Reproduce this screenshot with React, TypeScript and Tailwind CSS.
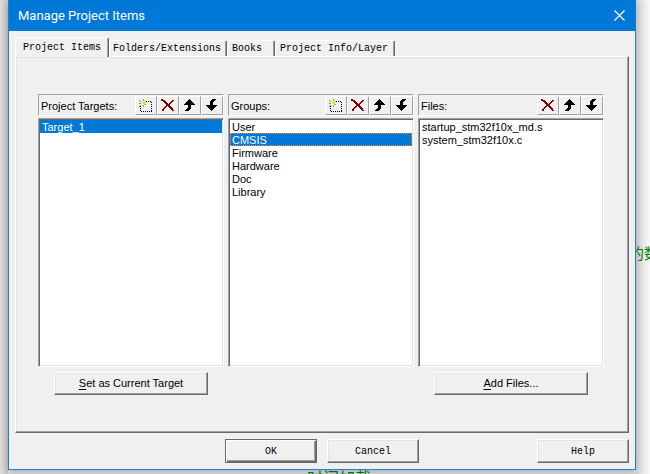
import { useState, type ReactNode } from "react";

type IconName = "new" | "delete" | "up" | "down";

const arrow = "M6 0h1v1h1v1h1v1h1v1h1v1h1v1H8v4H7v1H6v1H2v-1h1v-1h1V9h1V6H1V5h1V4h1V3h1V2h1V1h1z";

function ToolIcon({ name }: { name: IconName }) {
  return (
    <svg width="14" height="13" viewBox="0 0 14 13" shapeRendering="crispEdges" aria-hidden="true">
      {name === "new" && (
        <>
          <path d="M7 2.5h6M1.5 7v6M12.5 3v10M2 12.5h11" stroke="#000" strokeDasharray="1 1" fill="none" />
          <path
            d="M0 1h1v1H0zM1 2h1v1H1zM4 0h1v2H4zM0 4h2v1H0zM1 6h1v1H1zM0 7h1v1H0zM4 6h1v2H4zM6 5h1v1H6z"
            fill="#909090"
          />
          <path d="M6 1h1v1H6zM5 2h2v1H5zM3 3h3v2H3zM6 3h2v1H6zM5 5h1v1H5zM2 2h1v1H2z" fill="#e8e800" />
        </>
      )}
      {name === "delete" && (
        <path
          d="M0 0h2v1h2v1h1v1h1v1h1v1h1V4h1V3h1V2h1V1h2v1h-1v1h-1v1h-1v1H9v2h1v1h1v1h1v2h1v1h-2v-1h-1v-1H9V9H8V8H7V7H6v1H5v1H4v1H3v2H1v-2h1V9h1V8h1V7h1V5H4V4H3V3H2V2H0z"
          fill="#800000"
        />
      )}
      {name === "up" && <path d={arrow} fill="#000" />}
      {name === "down" && <path d={arrow} fill="#000" transform="rotate(180 6.5 6)" />}
    </svg>
  );
}

const iconLabels: Record<IconName, string> = {
  new: "New (Insert)",
  delete: "Delete",
  up: "Move Up",
  down: "Move Down",
};

function ListColumn({
  title,
  tools,
  items,
  initial,
  focused,
  children,
}: {
  title: string;
  tools: IconName[];
  items: string[];
  initial: number;
  focused?: boolean;
  children?: ReactNode;
}) {
  const [selected, setSelected] = useState(initial);
  return (
    <section className="flex min-w-0 flex-col" aria-label={title}>
      <div className="flex h-[22px] items-stretch border border-t-[#a0a0a0] border-l-[#a0a0a0] border-r-white border-b-white pt-px">
        <span className="flex-1 pl-0.5 leading-5">{title}:</span>
        {tools.map((t) => (
          <button
            key={t}
            type="button"
            aria-label={iconLabels[t]}
            className="flex w-[22px] items-center justify-center border border-t-white border-l-white border-r-[#a0a0a0] border-b-[#a0a0a0]"
          >
            <ToolIcon name={t} />
          </button>
        ))}
      </div>
      <ul
        role="listbox"
        aria-label={title}
        className="mt-0.5 flex-1 border border-t-[#a0a0a0] border-l-[#a0a0a0] border-r-white border-b-white bg-white p-px shadow-[inset_1px_1px_#696969,inset_-1px_-1px_#e3e3e3]"
      >
        {items.map((item, i) => (
          <li
            key={item}
            role="option"
            aria-selected={i === selected}
            onClick={() => setSelected(i)}
            className={
              "h-[13px] cursor-default pl-0.5 leading-[14px] " +
              (i === selected
                ? focused
                  ? "bg-[#0078d7] text-white outline-1 -outline-offset-1 outline-dotted outline-[#ff8728]"
                  : "bg-[#0078d7] text-white"
                : "text-black")
            }
          >
            {item}
          </li>
        ))}
      </ul>
      <div className="mx-4 mt-[5px] flex h-[23px]">{children}</div>
    </section>
  );
}

const raised =
  "border border-t-white border-l-white border-r-[#696969] border-b-[#696969] shadow-[inset_-1px_-1px_#a0a0a0,inset_1px_1px_#e3e3e3]";

function WideButton({ hotkey, rest }: { hotkey: string; rest: string }) {
  return (
    <button type="button" className={"flex-1 " + raised}>
      <span className="underline underline-offset-2">{hotkey}</span>
      {rest}
    </button>
  );
}

const tabs = [
  { label: "Project Items", width: "w-[94px] pl-[7px]" },
  { label: "Folders/Extensions", width: "w-[118px] pl-[3px]" },
  { label: "Books", width: "w-[48px] pl-1" },
  { label: "Project Info/Layer", width: "w-[120px] pl-1" },
];

const mono = "font-['Liberation_Mono',monospace] text-[10px]";

export default function App() {
  const [active, setActive] = useState(0);
  return (
    <div className="relative flex h-screen overflow-hidden bg-[#e0e0e0] pr-[14px] pb-1 pl-2 font-['Liberation_Sans',Arial,sans-serif] text-[11px] text-black">
      <div className="absolute inset-y-0 right-0 w-[14px] bg-linear-to-r from-[#d8d8d8] to-[#f8f8f8]" />
      <div className="absolute inset-y-0 left-0 w-2 bg-linear-to-r from-[#dfdfdf] to-[#c8c8c8]" />
      <span className="absolute top-[245px] left-[629px] font-['Noto_Sans_CJK_SC',sans-serif] text-[15px] leading-4 whitespace-nowrap text-[#008000]">
        的数
      </span>
      <span className="absolute top-[469px] left-[307px] font-['Noto_Sans_CJK_SC',sans-serif] text-[16px] leading-4 whitespace-nowrap text-[#008000]">
        时间加载
      </span>
      <main
        role="dialog"
        aria-labelledby="dialog-title"
        className="relative flex flex-1 flex-col border-x border-b border-[#1a80d8] bg-[#f0f0f0] shadow-[0_2px_8px_rgba(0,0,0,0.25)]"
      >
        <header className="flex h-[31px] shrink-0 items-center justify-between bg-[#0078d7] pr-2.5 pl-[9px] text-white">
          <h1 id="dialog-title" className="font-[Roboto,sans-serif] text-[13px]">
            Manage Project Items
          </h1>
          <button type="button" aria-label="Close">
            <svg width="11" height="11" viewBox="0 0 11 11" stroke="#fff" strokeWidth="1.2" fill="none">
              <path d="M.5.5l10 10M10.5.5l-10 10" />
            </svg>
          </button>
        </header>
        <div className="flex flex-1 flex-col px-1.5 pt-1.5 pb-1.5">
          <div role="tablist" className={"flex h-[19px] items-end " + mono}>
            {tabs.map((t, i) => (
              <button
                key={t.label}
                type="button"
                role="tab"
                aria-selected={i === active}
                onClick={() => setActive(i)}
                className={
                  t.width +
                  " shrink-0 rounded-t-xs border-t border-r border-l border-t-white border-r-[#696969] border-l-white bg-[#f0f0f0] text-left whitespace-nowrap shadow-[inset_-1px_0_#a0a0a0] " +
                  (i === active ? "relative -mb-px h-5" : "h-4")
                }
              >
                {t.label}
              </button>
            ))}
          </div>
          <div
            role="tabpanel"
            className={"grid flex-1 grid-cols-3 gap-1 pt-[37px] pr-6 pb-[37px] pl-[22px] " + raised}
          >
            <ListColumn title="Project Targets" tools={["new", "delete", "up", "down"]} items={["Target_1"]} initial={0}>
              <WideButton hotkey="S" rest="et as Current Target" />
            </ListColumn>
            <ListColumn
              title="Groups"
              tools={["new", "delete", "up", "down"]}
              items={["User", "CMSIS", "Firmware", "Hardware", "Doc", "Library"]}
              initial={1}
              focused
            />
            <ListColumn
              title="Files"
              tools={["delete", "up", "down"]}
              items={["startup_stm32f10x_md.s", "system_stm32f10x.c"]}
              initial={-1}
            >
              <WideButton hotkey="A" rest="dd Files..." />
            </ListColumn>
          </div>
          <footer className={"mt-1.5 grid grid-cols-[1fr_auto_1fr] " + mono}>
            <div className="col-start-2 flex gap-2.5">
              <button
                type="button"
                className="h-6 w-[92px] border border-[#696969] shadow-[inset_1px_1px_#fff,inset_-1px_-1px_#696969,inset_-2px_-2px_#a0a0a0]"
              >
                OK
              </button>
              <button type="button" className={"h-6 w-[92px] " + raised}>
                Cancel
              </button>
            </div>
            <button type="button" className={"h-6 w-[92px] justify-self-end " + raised}>
              Help
            </button>
          </footer>
        </div>
      </main>
    </div>
  );
}
